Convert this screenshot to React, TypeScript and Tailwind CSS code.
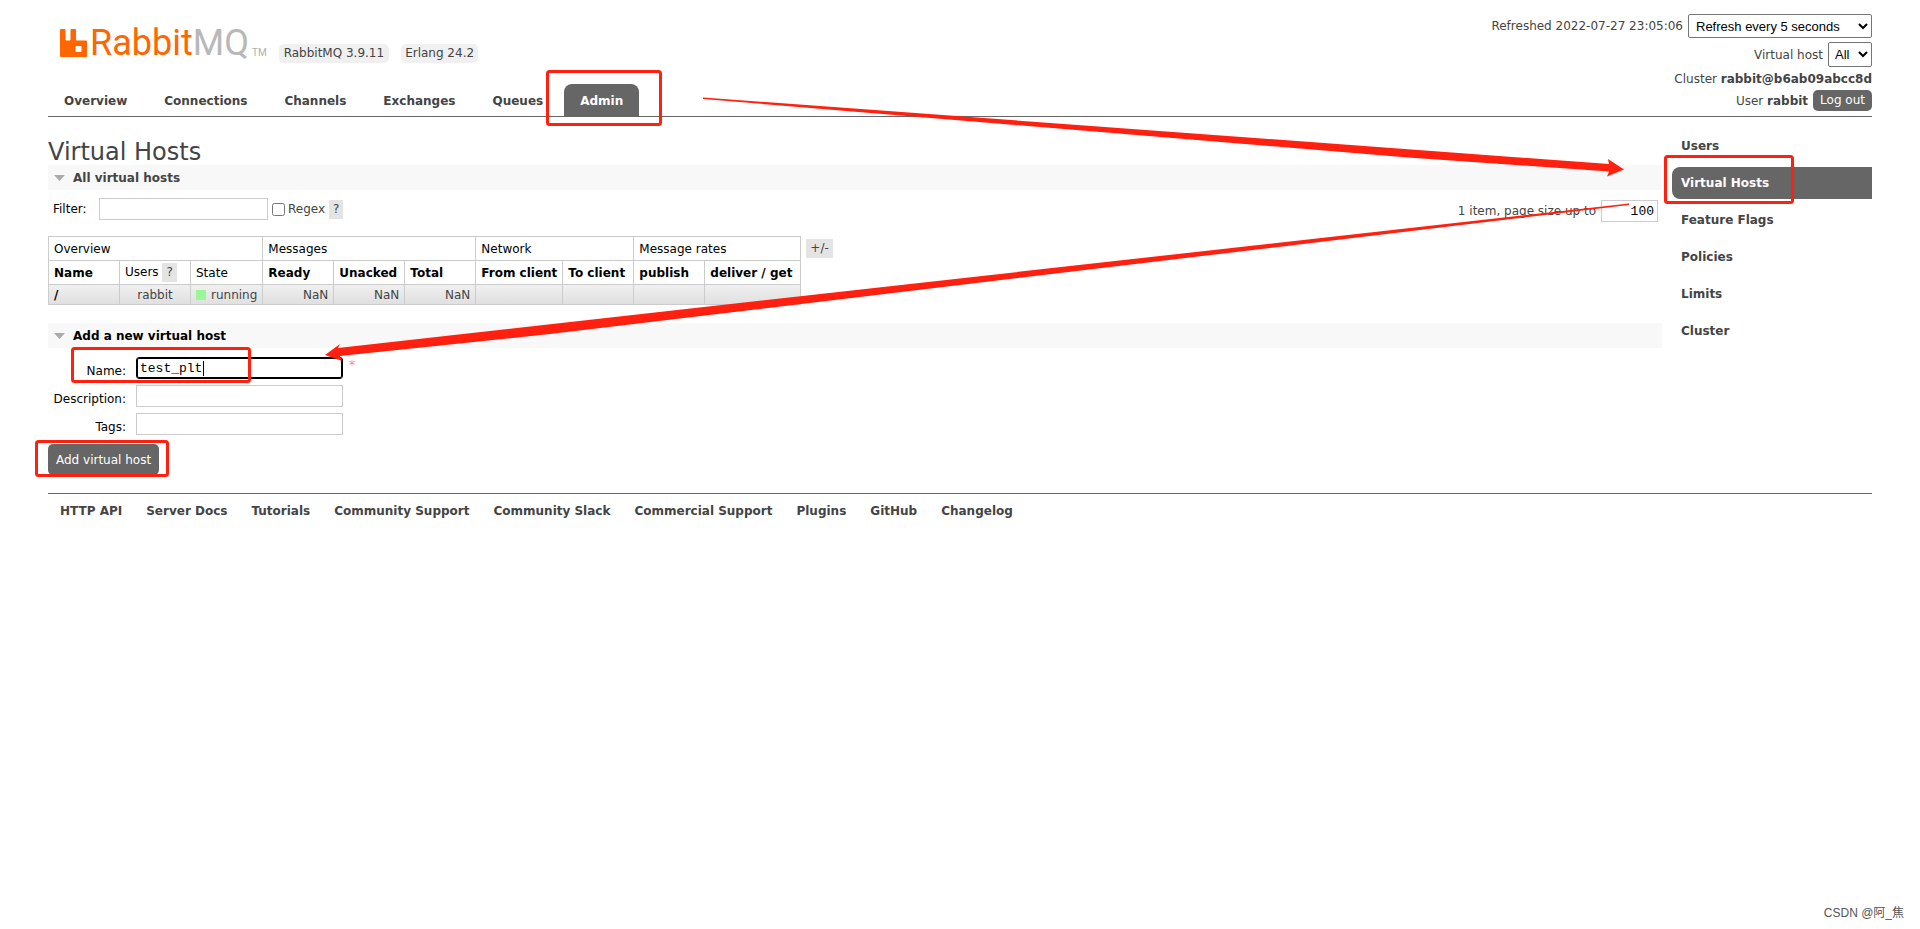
import { useState } from 'react';
import type { ReactNode } from 'react';

const TABS = ['Overview', 'Connections', 'Channels', 'Exchanges', 'Queues', 'Admin'];
const SIDE_LINKS = ['Users', 'Virtual Hosts', 'Feature Flags', 'Policies', 'Limits', 'Cluster'];
const FOOTER_LINKS = [
    'HTTP API',
    'Server Docs',
    'Tutorials',
    'Community Support',
    'Community Slack',
    'Commercial Support',
    'Plugins',
    'GitHub',
    'Changelog',
];

function Logo() {
    return (
        <a href="#" className="flex items-end" aria-label="RabbitMQ">
            <svg width="27" height="28" viewBox="0 0 27 28" className="mr-[3px] mb-[6px]">
                <path
                    fill="#ff6600"
                    fillRule="evenodd"
                    d="M1 0h3.500a1 1 0 0 1 1 1v9.500a1 1 0 0 0 1 1h3a1 1 0 0 0 1-1V1a1 1 0 0 1 1-1h3.500a1 1 0 0 1 1 1v9.500a1 1 0 0 0 1 1h9a1 1 0 0 1 1 1V27a1 1 0 0 1-1 1H1a1 1 0 0 1-1-1V1a1 1 0 0 1 1-1zM16.500 17a1 1 0 0 0-1 1v4a1 1 0 0 0 1 1h4a1 1 0 0 0 1-1v-4a1 1 0 0 0-1-1z"
                />
            </svg>
            <span className="font-['Roboto'] text-4xl leading-10 text-[#ff6600]">
                Rabbit<span className="text-[#b8b8b8]">MQ</span>
            </span>
            <span className="ml-[3px] mb-[5px] font-['Roboto'] text-[10px] leading-none text-[#b0b0b0]">TM</span>
        </a>
    );
}

function Help({ children }: { children: ReactNode }) {
    return (
        <button type="button" className="h-[19px] bg-[#e4e4e4] px-1 leading-[19px] text-[#444]">
            {children}
        </button>
    );
}

function SectionTitle({ children, dark }: { children: ReactNode; dark?: boolean }) {
    return (
        <h2 className={`flex h-[25px] items-center gap-2 bg-[#f8f8f8] pl-[6px] font-bold ${dark ? 'text-black' : 'text-[#444]'}`}>
            <svg width="11" height="6" viewBox="0 0 11 6">
                <path d="M0 0h11L5.500 6z" fill="#aaa" />
            </svg>
            {children}
        </h2>
    );
}

function HostsTable() {
    const cell = 'border border-[#ccc] px-[5px]';

    return (
        <table className="border-collapse text-left text-black">
            <thead>
                <tr className="h-6">
                    <th colSpan={3} className={`${cell} font-normal`}>Overview</th>
                    <th colSpan={3} className={`${cell} font-normal`}>Messages</th>
                    <th colSpan={2} className={`${cell} font-normal`}>Network</th>
                    <th colSpan={2} className={`${cell} font-normal`}>Message rates</th>
                </tr>
                <tr className="h-6 whitespace-nowrap">
                    <th className={`${cell} w-[71px]`}>Name</th>
                    <th className={`${cell} w-[71px] font-normal`}>
                        Users <Help>?</Help>
                    </th>
                    <th className={`${cell} w-[72px] font-normal`}>State</th>
                    <th className={`${cell} w-[71px]`}>Ready</th>
                    <th className={`${cell} w-[71px]`}>Unacked</th>
                    <th className={`${cell} w-[71px]`}>Total</th>
                    <th className={`${cell} w-[87px]`}>From client</th>
                    <th className={`${cell} w-[71px]`}>To client</th>
                    <th className={`${cell} w-[71px]`}>publish</th>
                    <th className={`${cell} w-[96px]`}>deliver / get</th>
                </tr>
            </thead>
            <tbody>
                <tr className="h-5 bg-linear-to-b from-[#f0f0f0] to-[#dfdfdf] text-[#444]">
                    <td className={`${cell} font-bold text-black`}>
                        <a href="#">/</a>
                    </td>
                    <td className={`${cell} text-center`}>rabbit</td>
                    <td className={cell}>
                        <div className="flex items-center gap-[5px]">
                            <span className="size-[10px] bg-[#98f898]" />
                            running
                        </div>
                    </td>
                    <td className={`${cell} text-right`}>NaN</td>
                    <td className={`${cell} text-right`}>NaN</td>
                    <td className={`${cell} text-right`}>NaN</td>
                    <td className={cell}></td>
                    <td className={cell}></td>
                    <td className={cell}></td>
                    <td className={cell}></td>
                </tr>
            </tbody>
        </table>
    );
}

// Red boxes and arrows that walk through the steps
function Annotations() {
    return (
        <svg
            className="pointer-events-none absolute top-0 left-0"
            width="1920"
            height="600"
            viewBox="0 0 1920 600"
            aria-hidden="true"
        >
            <g fill="none" stroke="#ff2010" strokeWidth="3">
                <rect x="547.500" y="71.500" width="113" height="53" rx="2" />
                <rect x="1665.500" y="156.500" width="127" height="46" rx="2" />
                <rect x="72.500" y="348.500" width="177" height="33" rx="2" />
                <rect x="36.500" y="441.500" width="131" height="34" rx="2" />
            </g>
            <g fill="#ff2010">
                <path d="M703 97.500L1609 164l-1-5 16 10.500-17 7 2-5-201-14L703 99z" />
                <path d="M1629 203.500L338 348l2-4-15 11 17 6-2-5 210-22L1629 205z" />
            </g>
        </svg>
    );
}

export default function App() {
    const [filter, setFilter] = useState('');
    const [name, setName] = useState('test_plt');
    const [pageSize, setPageSize] = useState('100');

    const input = "h-[22px] border border-[#ccc] bg-white px-[3px] font-['Liberation_Mono',monospace] text-[13px] text-black outline-none";

    return (
        <div className="relative min-h-screen bg-white font-['DejaVu_Sans',Verdana,sans-serif] text-xs text-[#444]">
            <div className="px-12">
                <header className="flex h-[117px] justify-between border-b border-[#666]">
                    <div className="flex flex-col justify-between">
                        <div className="flex items-end gap-3 pt-[23px] pl-3">
                            <Logo />
                            <span className="rounded-[5px] bg-[#f0f0f0] px-[5px] leading-[19px]">RabbitMQ 3.9.11</span>
                            <span className="rounded-[5px] bg-[#f0f0f0] px-1 leading-[19px]">Erlang 24.2</span>
                        </div>
                        <nav className="flex gap-[5px] font-bold">
                            {TABS.map((tab) => (
                                <a
                                    key={tab}
                                    href="#"
                                    className={`rounded-t-lg px-4 pt-[2px] leading-[30px] ${tab === 'Admin' ? 'bg-[#666] text-white' : ''}`}
                                >
                                    {tab}
                                </a>
                            ))}
                        </nav>
                    </div>

                    <div className="flex flex-col items-end pt-[14px]">
                        <label className="mb-1 flex items-center gap-[5px]">
                            Refreshed 2022-07-27 23:05:06
                            <select className="h-6 w-[184px] rounded-xs border border-[#767676] bg-white pl-[3px] font-['Liberation_Sans',Arial,sans-serif] text-[13px] text-black">
                                <option>Refresh every 5 seconds</option>
                            </select>
                        </label>
                        <label className="mb-1 flex items-center gap-[5px]">
                            Virtual host
                            <select className="h-[25px] w-11 rounded-xs border border-[#767676] bg-white pl-[2px] font-['Liberation_Sans',Arial,sans-serif] text-[13px] text-black">
                                <option>All</option>
                            </select>
                        </label>
                        <p className="mb-[3px] leading-4">
                            Cluster <b>rabbit@b6ab09abcc8d</b>
                        </p>
                        <div className="flex items-center gap-[5px]">
                            <span>User <b>rabbit</b></span>
                            <button type="button" className="rounded-[5px] bg-[#666] px-[7px] leading-[21px] text-white">
                                Log out
                            </button>
                        </div>
                    </div>
                </header>

                <div className="flex gap-[10px]">
                    <main className="min-w-0 flex-1 pt-[22px]">
                        <h1 className="text-2xl leading-[26px]">Virtual Hosts</h1>
                        <SectionTitle>All virtual hosts</SectionTitle>
                        <div className="mt-2 flex items-start justify-between pr-1">
                            <div className="flex items-center">
                                <label htmlFor="filter" className="ml-[5px] w-[46px] text-black">Filter:</label>
                                <input
                                    id="filter"
                                    className={`${input} w-[169px]`}
                                    value={filter}
                                    onChange={(e) => setFilter(e.target.value)}
                                />
                                <label className="mr-1 ml-1 flex items-center gap-[3px]">
                                    <input type="checkbox" className="size-[13px]" />
                                    Regex
                                </label>
                                <Help>?</Help>
                            </div>
                            <label className="mt-[2px] flex items-center gap-[5px]">
                                1 item, page size up to
                                <input
                                    className={`${input} w-[57px] text-right`}
                                    value={pageSize}
                                    onChange={(e) => setPageSize(e.target.value)}
                                />
                            </label>
                        </div>

                        <div className="mt-[14px] mb-[18px] flex items-start gap-[5px]">
                            <HostsTable />
                            <div className="mt-[3px]">
                                <Help>+/-</Help>
                            </div>
                        </div>

                        <SectionTitle dark>Add a new virtual host</SectionTitle>
                        <form className="mt-[9px]">
                            <div className="grid grid-cols-[78px_207px_auto] gap-x-[10px] gap-y-[6px] text-black">
                                <label htmlFor="name" className="pt-[6px] text-right">Name:</label>
                                <div className="relative">
                                    <input
                                        id="name"
                                        className={`${input} w-full rounded-[3px] border-black ring-1 ring-black ring-inset`}
                                        value={name}
                                        onChange={(e) => setName(e.target.value)}
                                    />
                                    <span className="absolute top-1 left-[67px] h-[15px] w-px bg-black" />
                                </div>
                                <span className="-ml-1 text-[#f88]">*</span>
                                <label htmlFor="description" className="pt-[6px] text-right">Description:</label>
                                <input id="description" className={input} />
                                <span></span>
                                <label htmlFor="tags" className="pt-[6px] text-right">Tags:</label>
                                <input id="tags" className={input} />
                            </div>
                            <button type="button" className="mt-[9px] rounded-[5px] bg-[#666] px-2 pt-px leading-[30px] text-white">
                                Add virtual host
                            </button>
                        </form>
                    </main>

                    <nav className="flex w-[200px] flex-col gap-[5px] pt-[13px] font-bold">
                        {SIDE_LINKS.map((link) => (
                            <a
                                key={link}
                                href="#"
                                className={`rounded-l-lg pl-[9px] leading-8 ${link === 'Virtual Hosts' ? 'bg-[#666] text-white' : ''}`}
                            >
                                {link}
                            </a>
                        ))}
                    </nav>
                </div>

                <footer className="mt-[18px] flex gap-6 border-t border-[#666] pt-2 pl-3 leading-[18px] font-bold">
                    {FOOTER_LINKS.map((link) => (
                        <a key={link} href="#">{link}</a>
                    ))}
                </footer>
            </div>

            <Annotations />
            <span className="absolute right-4 bottom-2 font-['Liberation_Sans','Noto_Sans_CJK_SC',sans-serif] text-[#555]">
                CSDN @阿_焦
            </span>
        </div>
    );
}
